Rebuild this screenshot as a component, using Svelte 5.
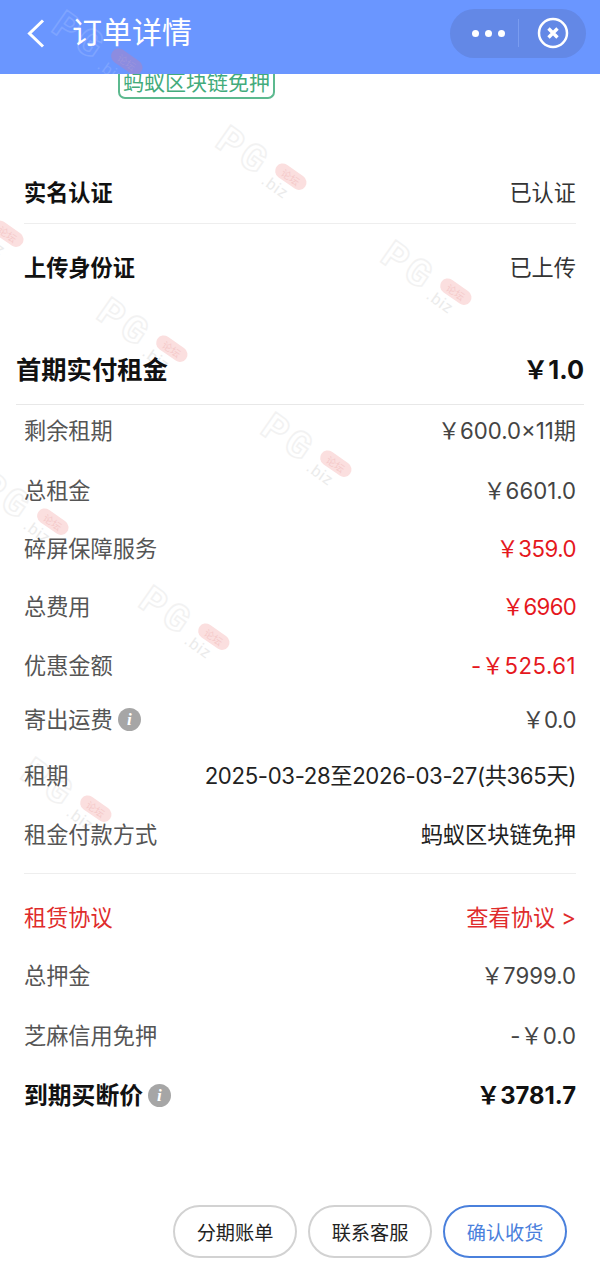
<script>
  const marks = [
    [-71, 182], [212, 125], [377, 240], [93, 297], [257, 412],
    [-26, 470], [135, 585], [17, 757]
  ];
  const fees = [
    { label: '剩余租期', value: '￥600.0×11期', h: 60 },
    { label: '总租金', value: '￥6601.0', h: 59 },
    { label: '碎屏保障服务', value: '￥359.0', h: 58, red: true, ls: -0.5 },
    { label: '总费用', value: '￥6960', h: 58, red: true, ls: -0.7 },
    { label: '优惠金额', value: '-￥525.61', h: 59, red: true, ls: 0.5 },
    { label: '寄出运费', value: '￥0.0', h: 49, info: true, ls: -0.4 },
    { label: '租期', value: '2025-03-28至2026-03-27(共365天)', h: 63, dark: true, ls: -0.35 },
    { label: '租金付款方式', value: '蚂蚁区块链免押', h: 55, dark: true }
  ];
  const terms = [
    { label: '租赁协议', value: '查看协议 >', h: 59, alert: true },
    { label: '总押金', value: '￥7999.0', h: 58 },
    { label: '芝麻信用免押', value: '-￥0.0', h: 61 },
    { label: '到期买断价', value: '￥3781.7', h: 59, strong: true, info: true }
  ];
</script>

<div class="page">
  {#each marks as [x, y]}
    <div class="mark" style:left="{x + 18}px" style:top="{y}px" aria-hidden="true">
      <span class="pg">PG</span><span class="biz">.biz</span><span class="pill">论坛</span>
    </div>
  {/each}

  <div class="content">
    <header class="nav">
      <div class="mark on-nav" aria-hidden="true">
        <span class="pg">PG</span><span class="biz">.biz</span><span class="pill">论坛</span>
      </div>
      <svg class="back" viewBox="0 0 20 30" aria-hidden="true"><path d="M17 2.5 L3.5 15.5 L17 28.5" /></svg>
      <span class="title">订单详情</span>
      <div class="capsule">
        <span class="dots"><i></i><i></i><i></i></span>
        <span class="sep"></span>
        <svg class="close" viewBox="0 0 32 32" aria-hidden="true">
          <circle cx="16" cy="16" r="14" />
          <path d="M11.5 11.5 L20.5 20.5 M20.5 11.5 L11.5 20.5" />
        </svg>
      </div>
    </header>

    <div class="tag-wrap"><span class="tag">蚂蚁区块链免押</span></div>

    <section class="identity">
      <div class="row id-row first"><b>实名认证</b><span>已认证</span></div>
      <div class="row id-row second"><b>上传身份证</b><span>已上传</span></div>
    </section>

    <div class="summary"><b>首期实付租金</b><b class="amount">￥1.0</b></div>

    <section class="fees">
      {#each fees as r}
        <div class="row" style:height="{r.h}px">
          <span class="label">{r.label}{#if r.info}<span class="info">i</span>{/if}</span>
          <span class="value" class:red={r.red} class:dark={r.dark} style:letter-spacing={r.ls ? `${r.ls}px` : null}>{r.value}</span>
        </div>
      {/each}
    </section>

    <section class="terms">
      {#each terms as r}
        <div class="row" class:strong={r.strong} class:alert={r.alert} style:height="{r.h}px">
          <span class="label">{r.label}{#if r.info}<span class="info">i</span>{/if}</span>
          <span class="value">{r.value}</span>
        </div>
      {/each}
    </section>

    <footer class="actions">
      <button>分期账单</button>
      <button>联系客服</button>
      <button class="primary">确认收货</button>
    </footer>
  </div>
</div>

<style>
  :global(body) { margin: 0; background: #fff; }
  .page {
    position: relative;
    width: 600px;
    height: 1280px;
    overflow: hidden;
    background: #fff;
    font-family: Inter, "Noto Sans CJK SC", sans-serif;
    font-size: 22.2px;
    color: #111;
  }
  .content { position: relative; z-index: 1; height: 100%; }
  .nav {
    position: relative;
    height: 74px;
    overflow: hidden;
    background: #6a96ff;
    display: flex;
    align-items: center;
    padding: 0 14px 0 26px;
    box-sizing: border-box;
    color: #fff;
  }
  .back { position: relative; width: 20px; height: 30px; margin-right: 26px; margin-bottom: 8px; }
  .back path { fill: none; stroke: #fff; stroke-width: 3; }
  .title { position: relative; font-size: 30px; line-height: 1; margin-bottom: 10px; flex: 1; }
  .capsule {
    position: relative;
    width: 136px;
    height: 49px;
    border-radius: 25px;
    background: #6388e6;
    display: flex;
    align-items: center;
    box-sizing: border-box;
    padding-left: 22px;
    margin-bottom: 8px;
  }
  .dots { display: flex; gap: 6px; }
  .dots i { width: 7px; height: 7px; border-radius: 50%; background: #fff; }
  .sep { width: 1px; height: 28px; background: #7a9cf0; margin: 0 18px 0 13px; }
  .close { width: 32px; height: 32px; }
  .close circle { fill: none; stroke: #fff; stroke-width: 2.5; }
  .close path { fill: none; stroke: #fff; stroke-width: 3.4; }
  .tag-wrap { height: 26px; padding-left: 118px; overflow: hidden; }
  .tag {
    display: block;
    width: 157px;
    height: 25px;
    box-sizing: border-box;
    border: 2px solid #5cb98f;
    border-top: 0;
    border-radius: 0 0 7px 7px;
    color: #43ab7c;
    font-size: 21px;
    line-height: 17px;
    text-align: center;
    white-space: nowrap;
  }
  .identity { margin: 59px 24px 0; }
  .row { display: flex; justify-content: space-between; align-items: center; white-space: nowrap; }
  .id-row { box-sizing: border-box; }
  .first { height: 65px; border-bottom: 1px solid #eee; }
  .second { height: 84px; }
  .id-row b { font-weight: 700; color: #111; }
  .id-row span { color: #333; }
  .summary {
    margin: 35px 16px 0;
    height: 62px;
    box-sizing: border-box;
    border-bottom: 1px solid #e8e8e8;
    display: flex;
    justify-content: space-between;
    align-items: center;
    font-size: 25.3px;
    padding-bottom: 11px;
  }
  .fees { margin: -6px 24px 0; border-bottom: 1px solid #eee; padding-bottom: 13px; }
  .terms { margin: 12px 24px 0; }
  .label { color: #555; display: inline-flex; align-items: center; }
  .value { color: #444; }
  .value.dark { color: #222; }
  .value.red { color: #e5171d; }
  .alert .label, .alert .value { color: #df2c2c; }
  .strong .label, .strong .value { color: #111; font-weight: 700; font-size: 23.8px; }
  .info {
    width: 23px;
    height: 23px;
    margin: 3px 0 0 5px;
    border-radius: 50%;
    background: #a6a6a6;
    color: #fff;
    font: italic 700 17px/23px "Liberation Serif", serif;
    text-align: center;
  }
  .actions {
    position: absolute;
    left: 173px;
    top: 1205px;
    display: flex;
    gap: 11px;
  }
  button {
    width: 124px;
    height: 53px;
    border: 2px solid #d2d2d2;
    border-radius: 27px;
    background: #fff;
    color: #222;
    font: 19.2px Inter, "Noto Sans CJK SC", sans-serif;
    padding: 0;
  }
  .primary { border-color: #4a80dc; color: #4a80dc; }
  .mark {
    position: absolute;
    width: 100px;
    height: 40px;
    transform: rotate(35deg);
    transform-origin: 0 0;
    pointer-events: none;
  }
  .pg {
    position: absolute;
    left: -2px;
    top: -7px;
    font: 700 40px "Liberation Mono", monospace;
    letter-spacing: 4px;
    color: transparent;
    -webkit-text-stroke: 1.6px #f2f2f2;
  }
  .biz {
    position: absolute;
    left: 58px;
    top: 16px;
    font: 16px "Liberation Sans", sans-serif;
    letter-spacing: 1px;
    color: #ebebeb;
  }
  .pill {
    position: absolute;
    left: 62px;
    top: 0;
    width: 35px;
    height: 15px;
    border-radius: 8px;
    background: #fbdfdf;
    color: #f5caca;
    font: 10px/15px "Noto Sans CJK SC", sans-serif;
    text-align: center;
  }
  .on-nav { left: 66px; top: 10px; }
  .on-nav .pg { -webkit-text-stroke-color: #7ea4ff; }
  .on-nav .biz { color: #7ea4ff; }
  .on-nav .pill { background: #8c8ce0; color: #9a94dc; }
</style>
